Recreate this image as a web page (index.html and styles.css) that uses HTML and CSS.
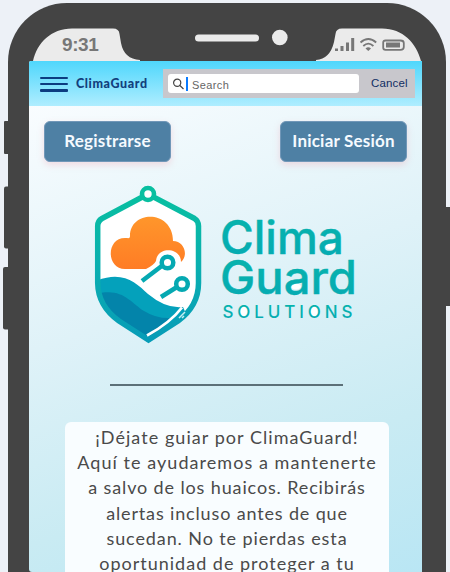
FILE: index.html
```
<!DOCTYPE html>
<html lang="es">
<head>
<meta charset="utf-8">
<title>ClimaGuard</title>
<link rel="stylesheet" href="styles.css">
</head>
<body>
<main class="stage">
  <svg class="side-keys" viewBox="0 0 450 572" aria-hidden="true">
    <g fill="#444">
      <rect x="4" y="121" width="8" height="33" rx="1"/>
      <rect x="4" y="186.500" width="8" height="62" rx="2"/>
      <rect x="3" y="267" width="9" height="62.500" rx="2"/>
      <rect x="444" y="207" width="10" height="99" rx="1"/>
    </g>
  </svg>
  <div class="phone">
    <div class="status">
      <svg class="status-shape" width="438" height="58" viewBox="8 3 438 58" aria-hidden="true">
        <g fill="#ebebeb">
          <path d="M33 61C37 43 51 28.500 72 28.500H113Q119 28.500 119.500 34L121 43Q124 59 140 60V61Z"/>
          <path d="M421 61C416 43 403 28.500 382 28.500H342Q336 28.500 335.500 34L334 42Q330 59 316 60V61Z"/>
          <rect x="195" y="34.500" width="64" height="7" rx="3.500"/>
          <circle cx="279.800" cy="37.500" r="7.800"/>
        </g>
        <g fill="#777">
          <rect x="335" y="48.500" width="3" height="2.500"/><rect x="340.500" y="46" width="3" height="5"/><rect x="346" y="42.500" width="3" height="8.500"/><rect x="351.200" y="38" width="3" height="13"/>
          <path d="M365.500 48.400Q368.300 46.200 371 48.400L368.300 51Z"/>
          <rect x="386" y="42.500" width="14" height="5"/>
        </g>
        <g fill="none" stroke="#777" stroke-width="1.800">
          <path d="M360.500 42.500Q368.300 35.500 376.200 42.500M363.300 46Q368.300 41.200 373.400 46"/>
          <path d="M385.500 40.500H400.500Q403.800 40.500 403.800 43V47Q403.800 49.800 400.500 49.800H385.500Q383.200 49.800 383.200 47.800V42.500Q383.200 40.500 385.500 40.500Z"/>
        </g>
      </svg>
      <time class="clock">9:31</time>
    </div>
    <div class="screen">
      <header class="topbar">
        <div class="burger"><i></i><i></i><i></i></div>
        <span class="brand">ClimaGuard</span>
        <div class="search">
          <div class="field">
            <svg width="13" height="12" viewBox="0 0 13 12" fill="none" stroke="#444" stroke-width="1.200"><circle cx="5.200" cy="4.800" r="3.600"/><path d="M7.900 7.500L11.500 11"/></svg>
            <span class="caret"></span><span class="placeholder">Search</span>
          </div>
          <span class="cancel">Cancel</span>
        </div>
      </header>
      <div class="actions">
        <button class="btn register">Registrarse</button>
        <button class="btn login">Iniciar Sesión</button>
      </div>
      <svg class="logo" width="270" height="170" viewBox="90 180 270 170" role="img" aria-label="Clima Guard Solutions">
        <defs>
          <linearGradient id="edge" x1="0" y1="0" x2="0" y2="1"><stop offset="0" stop-color="#08bfa0"/><stop offset=".5" stop-color="#0aafb0"/><stop offset="1" stop-color="#079cb7"/></linearGradient>
          <linearGradient id="cloud" x1="0" y1="0" x2="0" y2="1"><stop offset="0" stop-color="#ff962b"/><stop offset="1" stop-color="#ff7c25"/></linearGradient>
          <linearGradient id="word" x1="0" y1="0" x2="0" y2="1"><stop offset="0" stop-color="#07b5ab"/><stop offset="1" stop-color="#05a9b4"/></linearGradient>
          <clipPath id="inside"><path d="M148 192L99 217.500Q97.500 219 97.500 223V285Q99 312 124 325L148.500 342.500L174 325Q198 310 199 285V223Q199 219 197 217.500Z"/></clipPath>
        </defs>
        <path d="M148 194L102 218.500Q97.700 221 97.700 226V283Q98 306 119 321L148.500 340L178 321Q198.500 306 198.500 283V226Q198.500 221 194.500 218.500Z" fill="#fff"/>
        <path d="M125 269C106 269 106 238 125 238C127 237.500 130 239.500 130 236C130 209.500 173 209.500 173 241C184 241 189 255 181 262C181 247 157 246 156 261Q154 265 146 269Z" fill="url(#cloud)"/>
        <g clip-path="url(#inside)">
          <path d="M96 281C123 270 136 283 148 294Q166 309 183 307L188 318L148 346L96 320Z" fill="#04a1bb"/>
          <path d="M96 294C122 287 130 302 144 311Q157 319 171 318L148 345L96 322Z" fill="#0384aa"/>
        </g>
        <path d="M148 194L102 218.500Q97.700 221 97.700 226V283Q98 306 119 321L148.500 340L178 321Q198.500 306 198.500 283V226Q198.500 221 194.500 218.500Z" fill="none" stroke="url(#edge)" stroke-width="5.500"/>
        <path d="M147 335.500Q170 323 182 307.500" fill="none" stroke="#fff" stroke-width="2.800"/>
        <circle cx="148" cy="194" r="6" fill="#fff" stroke="#08bfa0" stroke-width="4.600"/>
        <g fill="#fff" stroke="#05a9b2" stroke-width="4.500">
          <path d="M142 281L163 265M161 297L177 287"/>
          <circle cx="167.500" cy="262.500" r="5.800"/><circle cx="182" cy="284" r="5.800"/>
        </g>
        <path d="M179 318l3-3m0 3l2-2m-2-1l3-3" stroke="#c4eef3" stroke-width="1.500"/>
        <g fill="#fff"><ellipse cx="330.500" cy="246.500" rx="5" ry="3"/><ellipse cx="296" cy="286.500" rx="5" ry="3"/><ellipse cx="243.500" cy="311.500" rx="4.500" ry="5"/><ellipse cx="314" cy="311.500" rx="4.500" ry="5"/></g>
        <g class="wordmark" fill="url(#word)">
          <text x="220" y="254" textLength="124" lengthAdjust="spacingAndGlyphs">Clima</text>
          <text x="220" y="294" textLength="137" lengthAdjust="spacingAndGlyphs">Guard</text>
          <text class="sub" x="222.500" y="318" textLength="130">SOLUTIONS</text>
        </g>
      </svg>
      <hr class="rule">
      <p class="intro">
        <span class="l1">¡Déjate guiar por ClimaGuard!</span>
        <span class="l2">Aquí te ayudaremos a mantenerte</span>
        <span class="l3">a salvo de los huaicos. Recibirás</span>
        <span class="l4">alertas incluso antes de que</span>
        <span class="l5">sucedan. No te pierdas esta</span>
        <span class="l6">oportunidad de proteger a tu</span>
      </p>
    </div>
  </div>
</main>
</body>
</html>
```
FILE: styles.css
```
* { box-sizing: border-box; }
body { margin: 0; background: #edf1f7; font-family: Lato, "Liberation Sans", sans-serif; overflow: hidden; }
.stage { position: relative; height: 572px; padding: 3px 4px 0 8px; overflow: hidden; }
.side-keys { position: absolute; left: 0; top: 0; width: 450px; height: 572px; }
.phone { position: relative; width: 438px; height: 650px; background: #444; border-radius: 59px; overflow: hidden; }
.status { position: relative; height: 58px; }
.status-shape { display: block; }
.clock { position: absolute; left: 54px; top: 31px; font: bold 19px/21px "Liberation Sans", sans-serif; color: #777; letter-spacing: -.4px; }
.screen { width: 393px; height: 511px; margin-left: 21px; border-radius: 2px 0 0 3px; overflow: hidden; background: linear-gradient(161deg, #fafdff 5%, #dff2f8 45%, #c9ebf3 75%, #b9e6f4 100%); }
.topbar { height: 45px; padding: 8px 7px 0 11px; display: flex; background: linear-gradient(#4fd7fc, #afedff); }
.burger { width: 28px; height: 15px; margin-top: 7.500px; display: flex; flex-direction: column; justify-content: space-between; }
.burger i { height: 2.500px; border-radius: 1px; background: #0c3c80; }
.brand { width: 95px; padding-left: 8px; font-weight: 900; font-size: 12.500px; line-height: 30px; color: #123f7d; letter-spacing: .6px; }
.search { width: 252px; height: 29px; display: flex; align-items: center; background: #c8c7cc; font-family: "Liberation Sans", sans-serif; font-size: 11px; }
.field { width: 191px; height: 19px; margin-left: 5px; padding-left: 4px; display: flex; align-items: center; background: #fff; border-radius: 3px; }
.caret { width: 2px; height: 14px; margin-left: 1px; background: #0a7bff; }
.placeholder { margin: 2px 0 0 4px; color: #666; letter-spacing: .4px; }
.cancel { margin: -2px 0 0 12px; color: #102e63; font-size: 11.500px; letter-spacing: .15px; }
.actions { height: 56px; padding: 15px 15px 0; display: flex; justify-content: space-between; }
.btn { width: 127px; height: 41px; padding: 0 0 2px; border: 1px solid #7197b8; border-radius: 6px; background: #4e80a4; color: #f5faff; font: bold 17px Lato, sans-serif; box-shadow: 0 3px 7px rgba(239, 126, 148, .25); }
.register { letter-spacing: .2px; }
.login { letter-spacing: .2px; }
.logo { display: block; margin: 18px 0 0 61px; }
.wordmark { font: 500 46px Inter, sans-serif; stroke: #06b0af; stroke-width: .4px; }
.wordmark .sub { font-size: 17px; stroke-width: 0; }
.rule { width: 233px; height: 2px; margin: 34px 0 0 81px; border: 0; background: #5c7078; }
.intro { width: 324px; height: 180px; margin: 36px 0 0 36px; padding-top: 3px; border-radius: 6px; background: #f9fdff; color: #4a4a4a; font-size: 18px; line-height: 25.200px; text-align: center; }
.intro span { display: block; white-space: nowrap; }
.l1 { letter-spacing: 1.05px; }
.l2 { letter-spacing: 1.05px; }
.l3 { letter-spacing: .87px; }
.l4 { letter-spacing: .85px; }
.l5 { letter-spacing: .9px; }
.l6 { letter-spacing: 1px; }
```
